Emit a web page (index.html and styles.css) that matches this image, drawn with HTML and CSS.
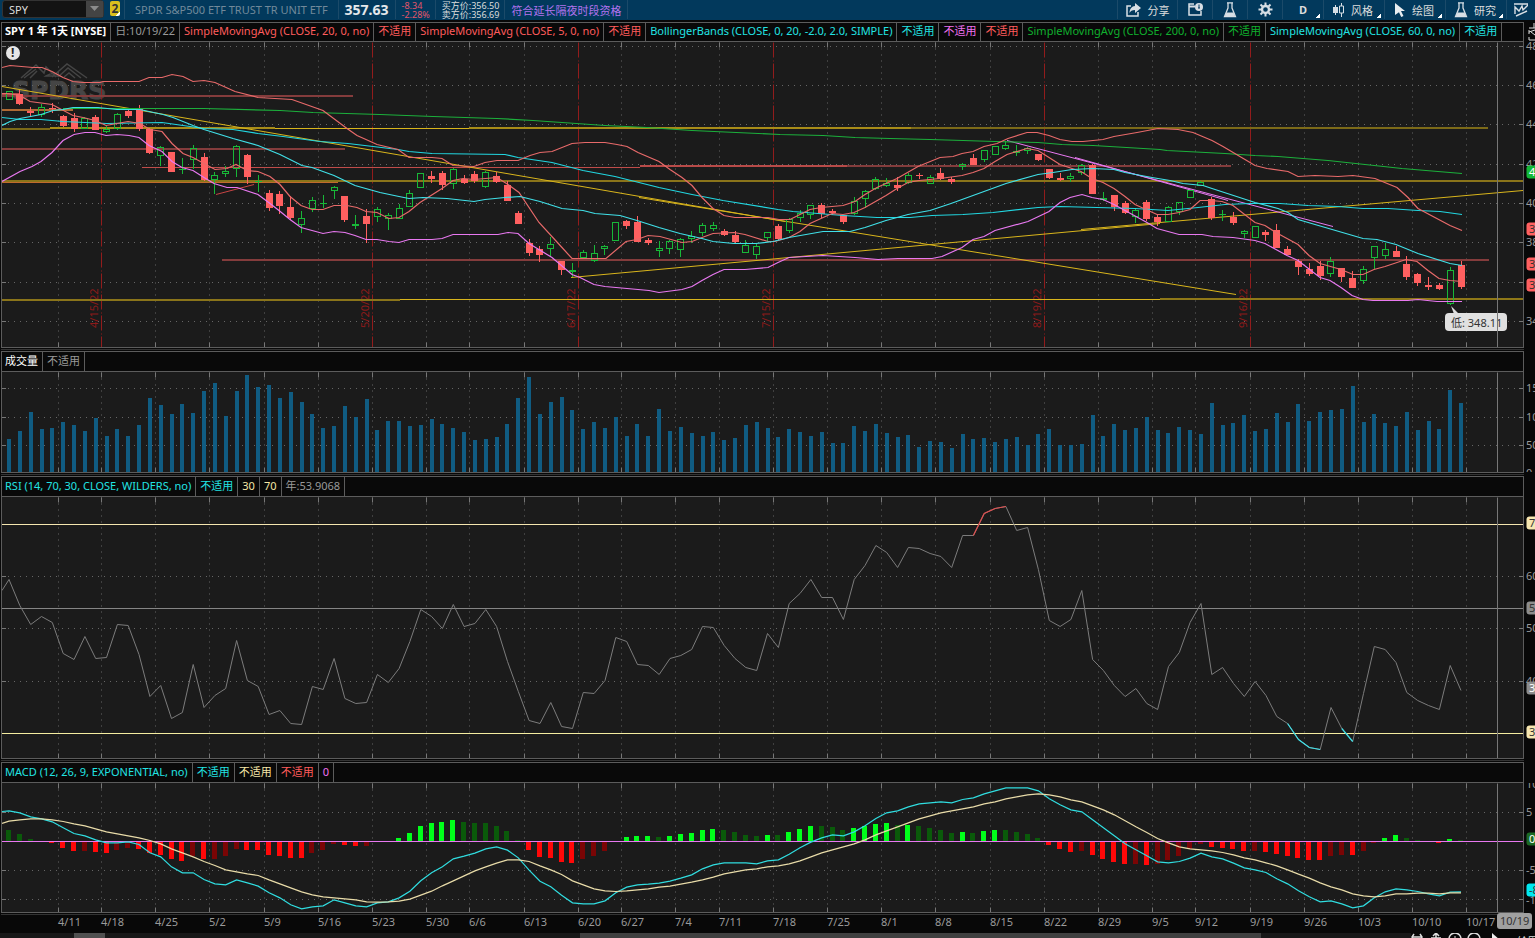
FILE: index.html
```html
<!DOCTYPE html>
<html lang="zh-CN">
<head>
  <meta charset="UTF-8" />
  <meta name="viewport" content="width=device-width, initial-scale=1.0"/>
  <title>SPY 1 年 1天</title>
  <link rel="stylesheet" href="styles.css">
</head>
<body>
  <header class="toolbar">
    <div class="symbol-box">
      <input type="text" id="symbol" class="symbol" value="SPY" aria-label="代码" />
      <button type="button" class="symbol-drop" aria-label="代码列表">
        <svg width="9" height="6" viewBox="0 0 9 6"><path d="M0 0h9L4.500 5z" fill="#8c8c8c"/></svg>
      </button>
    </div>
    <button type="button" class="link-badge corner">2</button>
    <div class="cell company">SPDR S&amp;P500 ETF TRUST TR UNIT ETF</div>
    <div class="cell last">357.63</div>
    <div class="cell small down">-8.34<br>-2.28%</div>
    <div class="cell small">买方价:356.50<br>卖方价:356.69</div>
    <div class="cell session">符合延长隔夜时段资格</div>
    <div class="spacer"></div>
    <button type="button" class="tool w-share">
      <svg width="16" height="14" viewBox="0 0 16 14"><path d="M5 3H1v10h11V9" fill="none" stroke="#d8dfe5" stroke-width="1.500"/><path d="M9 0l6 5-6 5V7C6 7 4.500 8 3.500 10 3.500 6 6 3 9 3z" fill="#d8dfe5"/></svg>
      分享
    </button>
    <button type="button" class="tool w-icon" aria-label="日程">
      <svg width="15" height="13" viewBox="0 0 15 13"><path d="M6 1H1v11h12V8" fill="none" stroke="#d8dfe5" stroke-width="1.500"/><path d="M1 3.500h6" stroke="#d8dfe5" stroke-width="2"/><circle cx="11" cy="4" r="4" fill="#d8dfe5"/><path d="M11 1.500v3.500M10 5h2" fill="none" stroke="#02395c"/></svg>
    </button>
    <button type="button" class="tool w-icon" aria-label="实验">
      <svg width="14" height="16" viewBox="0 0 14 16"><path d="M4 .8h6M5 1v5L1.500 14.500h11L9 6V1" fill="none" stroke="#d8dfe5" stroke-width="1.300"/><path d="M3.500 10.500h7l1.500 3.500H2z" fill="#d8dfe5"/></svg>
    </button>
    <button type="button" class="tool w-icon" aria-label="设置">
      <svg width="15" height="15" viewBox="0 0 15 15"><circle cx="7.500" cy="7.500" r="3.500" fill="none" stroke="#d8dfe5" stroke-width="2.400"/><path d="M7.500 .5v3M7.500 11.500v3M.5 7.500h3M11.500 7.500h3M2.500 2.500l2 2M10.500 10.500l2 2M12.500 2.500l-2 2M4.500 10.500l-2 2" stroke="#d8dfe5" stroke-width="2"/></svg>
    </button>
    <button type="button" class="tool w-day corner"><b>D</b></button>
    <button type="button" class="tool w-menu corner">
      <svg width="12" height="14" viewBox="0 0 12 14"><path d="M2.500 2v10M8.500 0v14" stroke="#d8dfe5"/><path d="M0 4h5v6H0z" fill="#d8dfe5"/><path d="M6.500 3h4v7h-4z" fill="#02395c" stroke="#d8dfe5"/></svg>
      风格
    </button>
    <button type="button" class="tool w-menu corner">
      <svg width="12" height="14" viewBox="0 0 12 14"><path d="M1 0l10 8H7l2.500 5-2.300 1L5 9.200 1 12z" fill="#e8edf0"/></svg>
      绘图
    </button>
    <button type="button" class="tool w-menu corner">
      <svg width="14" height="16" viewBox="0 0 14 16"><path d="M4 .8h6M5 1v5L1.500 14.500h11L9 6V1" fill="none" stroke="#d8dfe5" stroke-width="1.300"/><path d="M3.500 10.500h7l1.500 3.500H2z" fill="#d8dfe5"/></svg>
      研究
    </button>
    <button type="button" class="tool w-last" aria-label="形态">
      <svg width="14" height="15" viewBox="0 0 14 15"><path d="M0 2h14M1 12V5l4 4 3-5 1 4 5-5M2 14l11-5" fill="none" stroke="#d8dfe5" stroke-width="1.400"/></svg>
    </button>
  </header>

  <main class="charts">
    <div class="chart-row">
      <section class="panel">
        <div class="legend first">
          <span class="white bold">SPY 1 年 1天 [NYSE]</span>
          <span class="gray">日:10/19/22</span>
          <span class="red">SimpleMovingAvg (CLOSE, 20, 0, no)</span>
          <span class="red">不适用</span>
          <span class="red">SimpleMovingAvg (CLOSE, 5, 0, no)</span>
          <span class="red">不适用</span>
          <span class="cyan">BollingerBands (CLOSE, 0, 20, -2.0, 2.0, SIMPLE)</span>
          <span class="cyan">不适用</span>
          <span class="magenta">不适用</span>
          <span class="red">不适用</span>
          <span class="green">SimpleMovingAvg (CLOSE, 200, 0, no)</span>
          <span class="green">不适用</span>
          <span class="cyan">SimpleMovingAvg (CLOSE, 60, 0, no)</span>
          <span class="cyan">不适用</span>
        </div>
        <svg class="plot price" id="price"></svg>
      </section>
      <div class="scale">
        <svg class="scale-icon" width="11" height="19" viewBox="0 0 11 19"><path d="M5 5h6M10 0v5M5 7v4M5 9l6-2M7 9l4 3M5 14v3h6" fill="none" stroke="#ddd"/></svg>
        <svg class="axis price" id="priceAxis"></svg>
      </div>
    </div>

    <div class="chart-row">
      <section class="panel">
        <div class="legend">
          <span class="white">成交量</span>
          <span class="gray">不适用</span>
        </div>
        <svg class="plot volume" id="volume"></svg>
      </section>
      <div class="scale"><svg class="axis volume" id="volumeAxis"></svg></div>
    </div>

    <div class="chart-row">
      <section class="panel">
        <div class="legend">
          <span class="cyan">RSI (14, 70, 30, CLOSE, WILDERS, no)</span>
          <span class="cyan">不适用</span>
          <span class="cream">30</span>
          <span class="cream">70</span>
          <span class="gray">年:53.9068</span>
        </div>
        <svg class="plot rsi" id="rsi"></svg>
      </section>
      <div class="scale"><svg class="axis rsi" id="rsiAxis"></svg></div>
    </div>

    <div class="chart-row">
      <section class="panel">
        <div class="legend">
          <span class="cyan">MACD (12, 26, 9, EXPONENTIAL, no)</span>
          <span class="cyan">不适用</span>
          <span class="cream">不适用</span>
          <span class="red">不适用</span>
          <span class="magenta">0</span>
        </div>
        <svg class="plot macd" id="macd"></svg>
      </section>
      <div class="scale"><svg class="axis macd" id="macdAxis"></svg></div>
    </div>
  </main>

  <svg class="dates" id="dates"></svg>

  <footer class="bottom">
    <div class="pager"><div class="pager-thumb"></div></div>
    <div class="scroll"><div class="scroll-thumb"></div></div>
    <div class="bottom-tools">
      <svg width="90" height="16" viewBox="0 0 90 16"><path d="M1 4h10M3 1L1 4l2 4M9 1l2 3-2 4M25 0v12M20 5h10M22 3l3-3 3 3" fill="none" stroke="#ddd" stroke-width="1.500"/><circle cx="44" cy="6" r="6" fill="none" stroke="#ddd" stroke-width="1.500"/><path d="M44 3v6" stroke="#ddd"/><circle cx="63" cy="6" r="6" fill="none" stroke="#ddd" stroke-width="1.500"/><path d="M81 0l8 7h-8z" fill="#eee"/></svg>
      <span>绘图</span>
    </div>
  </footer>

  <script src="chart.js"></script>
</body>
</html>
```

FILE: styles.css
```css
* {
  box-sizing: border-box;
}

body {
  margin: 0;
  min-height: 100vh;
  background: #080808;
  color: #ddd;
  font-family: "Noto Sans", "Noto Sans CJK SC", sans-serif;
  font-size: 11px;
  overflow: hidden;
}

svg {
  display: block;
  flex: none;
}

button {
  font-family: inherit;
  color: inherit;
  border: none;
  background: none;
  padding: 0;
}

/* toolbar */
.toolbar {
  display: flex;
  height: 20px;
  margin-bottom: 2px;
  padding-bottom: 1px;
  background: #02395c;
  white-space: nowrap;
  overflow: hidden;
}

.symbol-box {
  display: flex;
  width: 102px;
  height: 18px;
  margin: 0 6px 0 2px;
  border: 1px solid #333;
  border-radius: 3px;
  background: #131313;
}

.symbol {
  flex: 1;
  min-width: 0;
  padding: 0 6px;
  border: none;
  background: none;
  color: #ddd;
  font: inherit;
}

.symbol-drop {
  display: flex;
  align-items: center;
  justify-content: center;
  width: 17px;
  background: #444;
}

.link-badge {
  width: 10px;
  height: 15px;
  margin: 1px 4px 0 0;
  border-radius: 2px;
  background: #d9bf1e;
  color: #333;
  font-size: 12px;
  font-weight: bold;
  line-height: 15px;
}

.cell {
  display: flex;
  align-items: center;
  padding: 0 7px;
  border-left: 1px solid #1b4a69;
}

.company {
  padding: 0 10px;
  color: #71899a;
}

.last {
  padding: 0 6px;
  color: #e4e8eb;
  font-size: 14px;
  font-weight: bold;
}

.small {
  padding: 0 5px 0 6px;
  font-size: 9px;
  line-height: 9px;
}

.down {
  color: #e2556a;
}

.session {
  padding: 0 6px;
  border-right: 1px solid #1b4a69;
  color: #b273ee;
}

.spacer {
  flex: 1;
}

.tool {
  display: flex;
  align-items: center;
  justify-content: center;
  gap: 6px;
  border-left: 1px solid #1b4a69;
  font-size: 11px;
}

.w-share {
  width: 60px;
}

.w-icon {
  width: 35px;
}

.w-day {
  width: 41px;
}

.w-menu {
  width: 61px;
  padding-right: 2px;
}

.w-last {
  width: 29px;
}

.corner {
  background-image: linear-gradient(135deg, transparent 50%, #fff 50%);
  background-size: 4px 4px;
  background-repeat: no-repeat;
  background-position: right 3px bottom 1px;
}

.link-badge.corner {
  background-position: right bottom;
}

/* chart panels */
.chart-row {
  display: flex;
  margin-bottom: 3px;
}

.chart-row:last-child {
  margin-bottom: 0;
}

.panel {
  flex: 1;
  min-width: 0;
  margin-left: 1px;
  border: 1px solid #5c5c5c;
  box-shadow: 0 1px 0 #080808, 0 2px 0 #333;
}

.legend {
  display: flex;
  height: 20px;
  border-bottom: 1px solid #5c5c5c;
  background: #090909;
  line-height: 18px;
  white-space: nowrap;
  overflow: hidden;
}

.legend.first {
  height: 19px;
  line-height: 16px;
}

.legend span {
  padding: 0 4px;
  border-right: 1px solid #5c5c5c;
}

.legend span:first-child {
  padding-left: 3px;
}

.bold {
  font-weight: bold;
}

.white {
  color: #fff;
}

.gray {
  color: #999;
}

.red {
  color: #ff5c5c;
}

.cyan {
  color: #22e3e3;
}

.magenta {
  color: #f070f0;
}

.green {
  color: #10b02e;
}

.cream {
  color: #f5e6a6;
}

.plot {
  width: 100%;
  background: #1b1b1b;
}

.price {
  height: 305px;
}

.volume {
  height: 100px;
}

.rsi {
  height: 261px;
}

.macd {
  height: 129px;
}

.scale {
  display: flex;
  flex-direction: column;
  justify-content: flex-end;
  width: 11px;
  padding-bottom: 1px;
  overflow: hidden;
}

.axis {
  width: 11px;
}

.dates {
  width: 100%;
  height: 20px;
}

svg text {
  font-size: 11px;
  fill: #9a9a9a;
}

svg .expiry {
  fill: #8c1a1a;
}

svg .tip-text,
svg .tag-dark {
  fill: #333;
}

svg .tag-light {
  fill: #fff;
}

svg .watermark {
  fill: #454545;
  stroke: #454545;
  font-family: "DejaVu Sans", sans-serif;
  font-size: 25px;
  font-weight: bold;
}

svg .alert {
  fill: #222;
  font-size: 12px;
  font-weight: bold;
}

/* bottom strip */
.bottom {
  display: flex;
  height: 5px;
  overflow: hidden;
}

.pager {
  flex: 578;
  background: #181818;
}

.pager-thumb {
  width: 31px;
  height: 5px;
  margin-left: 74px;
  background: #505050;
}

.scroll {
  flex: 829;
  background: #181818;
}

.scroll-thumb {
  width: 82%;
  height: 5px;
  background: #404040;
}

.bottom-tools {
  display: flex;
  gap: 16px;
  width: 124px;
  height: 16px;
  white-space: nowrap;
}
```

FILE: chart.js
```js
const NS = "http://www.w3.org/2000/svg";
const BASE_WIDTH = 1521;
const COUNT = 135;

const SALMON = "#e86a6a";
const CYAN = "#40e0e8";
const MAGENTA = "#e878f0";
const GREEN = "#1cb03c";
const YELLOW = "#d9b51c";
const CREAM = "#f5e6b0";

const weeks = [
  [58, "4/11"], [101, "4/18"], [155, "4/25"], [209, "5/2"], [264, "5/9"], [318, "5/16"], [372, "5/23"],
  [426, "5/30"], [469, "6/6"], [524, "6/13"], [578, "6/20"], [621, "6/27"], [675, "7/4"], [719, "7/11"],
  [773, "7/18"], [827, "7/25"], [881, "8/1"], [935, "8/8"], [990, "8/15"], [1044, "8/22"], [1098, "8/29"],
  [1152, "9/5"], [1195, "9/12"], [1250, "9/19"], [1304, "9/26"], [1358, "10/3"], [1412, "10/10"], [1466, "10/17"]
];

const expiries = [[101, "4/15/22"], [372, "5/20/22"], [578, "6/17/22"], [773, "7/15/22"], [1044, "8/19/22"], [1250, "9/16/22"]];

// up (1) or down (0), wick top, body top, body bottom, wick bottom
const candles = [
  [1,91,91,100,100],[0,90,94,104,105],[0,107,111,113,117],[1,104,107,115,117],[0,103,108,109,113],[0,115,116,126,127],
  [0,113,118,129,132],[1,117,118,129,129],[0,115,117,130,130],[1,126,129,132,133],[1,113,114,129,130],[0,109,111,116,118],
  [0,105,109,129,131],[0,128,129,153,154],[1,146,147,156,166],[0,152,152,172,172],[1,158,169,170,174],[1,145,148,160,169],
  [0,153,157,180,181],[1,172,175,180,194],[1,166,171,174,177],[1,145,146,169,177],[0,154,155,177,184],[1,175,181,182,192],
  [0,190,193,208,211],[0,191,194,206,214],[0,196,207,218,220],[1,211,218,225,233],[1,197,200,209,212],[1,195,203,204,208],
  [1,186,187,191,199],[0,196,196,220,222],[1,215,224,226,229],[0,209,216,224,243],[1,207,209,217,222],[1,213,215,219,230],
  [1,204,208,219,219],[1,190,193,207,207],[1,173,173,188,188],[0,171,176,179,183],[0,171,173,185,190],[1,168,169,184,189],
  [0,175,179,183,184],[0,171,174,181,183],[1,171,172,187,188],[0,172,176,182,183],[0,181,185,201,201],[0,211,213,224,224],
  [0,239,243,253,256],[0,246,249,255,262],[1,237,244,249,257],[0,261,261,270,275],[1,263,270,272,277],[1,250,252,258,258],
  [1,245,253,261,262],[1,245,246,249,255],[1,222,222,241,241],[0,220,221,226,229],[0,216,222,242,242],[0,238,240,243,245],
  [1,241,248,251,257],[1,240,241,249,254],[1,238,239,250,257],[1,231,236,239,243],[1,223,225,233,236],[1,222,225,229,231],
  [0,229,231,235,236],[0,231,235,242,244],[1,240,245,253,253],[1,244,246,255,259],[1,232,232,238,241],[0,224,226,239,241],
  [1,218,219,231,233],[1,210,213,218,222],[1,205,205,215,219],[0,203,205,214,218],[0,209,211,213,215],[0,215,215,222,224],
  [1,197,201,214,215],[1,190,191,199,208],[1,177,179,189,190],[1,178,183,186,187],[0,177,185,188,191],[1,173,175,183,184],
  [0,173,175,176,179],[1,175,177,184,184],[0,168,173,179,180],[0,177,179,182,184],[1,163,164,167,170],[0,154,158,165,165],
  [1,150,150,160,162],[1,146,146,155,155],[1,141,145,149,150],[1,145,151,153,156],[1,147,148,151,154],[0,154,154,160,161],
  [0,169,169,178,179],[0,173,178,180,181],[1,173,176,179,182],[1,164,165,173,175],[0,164,165,194,194],[1,192,198,200,201],
  [0,195,195,207,211],[0,201,203,213,214],[1,209,210,217,223],[0,200,202,219,221],[0,215,217,222,226],[1,206,207,222,222],
  [1,202,202,212,215],[1,190,190,198,198],[1,181,182,186,186],[0,197,199,218,220],[1,210,214,215,221],[0,212,217,223,225],
  [1,230,231,234,238],[1,226,226,238,238],[0,230,232,235,241],[0,224,230,248,248],[0,246,249,255,255],[0,259,261,267,275],
  [0,263,269,274,276],[0,261,266,276,280],[1,257,261,274,277],[0,268,268,277,282],[0,271,278,288,288],[1,266,269,281,284],
  [1,246,246,258,269],[1,243,249,256,259],[0,246,251,257,257],[0,256,264,277,280],[0,273,274,283,286],[0,277,285,287,290],
  [0,283,285,289,290],[1,267,270,304,305],[0,261,265,287,289]
];

const upperBand = "2,67 10,65 33,67 42,67 52,71 63,77 73,81 83,82 100,82 103,81 139,81 149,77 162,77 172,74 183,76 193,81 204,80 215,82 235,91 258,97 292,99 323,110 347,128 357,135 366,139 377,144 398,149 409,157 432,157 442,158 453,165 474,166 485,162 497,160 518,160 530,155 540,152 552,151 572,143 585,142 605,142 617,144 627,146 638,152 659,161 670,169 682,177 692,185 702,197 713,208 724,215 735,217 768,217 779,219 790,219 800,214 810,209 821,207 843,205 855,201 865,194 877,187 897,178 918,166 940,157 953,156 962,153 973,151 984,146 997,143 1008,138 1027,132 1037,132 1049,135 1060,139 1072,141 1083,141 1103,139 1114,136 1137,132 1158,128 1178,129 1193,132 1212,140 1223,146 1245,159 1255,165 1267,168 1288,171 1298,176 1315,175 1338,176 1353,175 1375,178 1397,187 1408,197 1418,208 1450,225 1462,230";
const sma5 = "2,93 8,93 20,95 30,101 52,104 73,115 83,117 95,120 106,125 117,123 128,121 140,123 150,129 162,131 172,143 183,153 193,157 204,163 215,169 227,168 236,164 247,170 258,171 270,176 280,184 290,196 301,205 312,209 323,209 334,205 347,205 357,207 366,211 377,212 389,218 399,217 409,211 420,202 442,188 453,180 463,178 474,179 497,177 508,184 519,192 539,222 562,247 572,258 606,258 626,241 637,239 648,235 660,236 682,242 692,241 702,237 713,233 734,232 745,234 768,241 775,241 789,237 800,231 810,223 821,218 832,213 843,214 854,212 865,207 886,195 897,188 908,182 919,180 940,178 962,175 973,172 984,168 995,161 1007,154 1027,148 1038,150 1049,157 1060,164 1081,171 1092,178 1103,182 1114,188 1125,196 1135,204 1146,209 1157,214 1168,214 1179,212 1190,209 1200,200 1211,200 1222,201 1233,205 1255,222 1265,225 1276,232 1287,238 1298,244 1309,255 1320,263 1341,269 1353,274 1363,274 1374,269 1385,266 1406,259 1417,261 1428,270 1439,278 1450,280 1462,281";
const lowerBand = "2,181 20,171 32,166 41,161 52,152 63,140 74,134 85,132 95,132 106,135 117,134 129,135 139,137 149,145 162,151 172,161 182,167 193,170 204,177 214,183 227,187 237,187 258,194 270,203 279,210 290,219 301,227 323,233 334,231 345,232 355,235 366,239 377,239 389,241 399,242 409,239 432,239 442,238 453,234 498,234 508,232 518,233 529,243 552,257 572,274 580,277 594,284 605,286 649,290 659,292 682,289 692,286 702,280 713,274 724,269 745,269 768,267 778,262 789,257 823,255 855,257 878,259 898,258 932,258 942,256 962,247 973,239 984,236 995,230 1028,221 1049,211 1060,202 1070,197 1082,194 1092,197 1103,199 1114,204 1125,210 1147,222 1157,228 1179,234 1202,234 1213,236 1233,237 1255,240 1265,243 1276,249 1287,255 1298,260 1320,277 1330,280 1341,287 1352,295 1363,299 1373,300 1408,300 1418,299 1437,301 1462,301";
const sma20 = "2,125 10,121 20,118 41,114 53,110 63,109 73,107 98,107 117,109 140,109 149,111 163,114 173,117 193,125 204,129 233,138 258,145 280,154 302,165 312,167 334,175 355,185 380,192 399,196 409,198 423,197 447,198 474,201 485,199 505,197 520,196 540,201 562,208 583,210 595,213 620,215 637,220 659,227 680,233 702,238 713,241 734,243 756,243 773,241 789,237 823,231 850,231 865,227 886,220 908,214 930,210 951,203 973,195 1006,183 1038,174 1053,172 1072,169 1093,168 1114,169 1125,172 1152,177 1170,180 1183,183 1203,185 1212,188 1255,202 1278,208 1288,212 1298,219 1315,224 1363,238 1377,239 1396,244 1418,253 1450,263 1462,265";
const sma60 = "2,117 20,119 41,119 63,121 107,123 162,122 183,125 204,128 233,129 258,133 283,136 320,141 348,143 398,149 409,151 432,153 505,154 518,157 552,162 583,170 615,176 659,187 692,194 723,200 778,209 793,211 843,215 877,217 910,217 932,215 963,214 993,212 1038,207 1060,206 1097,207 1135,208 1168,210 1198,207 1225,204 1250,203 1280,203 1308,205 1338,206 1363,208 1388,208 1418,210 1440,211 1462,214";
const sma200 = "63,108 140,108 204,108 280,110 313,112 380,114 433,116 497,118 533,120 562,122 605,125 647,127 692,130 780,134 823,135 855,137 890,138 930,139 963,140 995,141 1038,142 1062,144 1093,145 1160,149 1167,150 1225,153 1255,155 1278,156 1328,160 1402,168 1462,173";

// x1, y1, x2, y2, colour, width
const drawings = [
  [2,96,353,96,"#843c3c",2],[2,94,20,94,"#b04848",2],[2,149,345,149,"#843c3c",2],[142,167,640,167,"#c04c4a",1],
  [640,166,847,166,"#b84a48",2],[847,166,1231,166,"#843c3c",2],[222,260,1489,260,"#843c3c",2],[2,110,73,110,"#b06a34",2],
  [2,129,50,129,"#7c6a18",2],[50,128,275,128,"#a88c18",2],[275,128,469,128,YELLOW,1],[469,128,911,128,"#a88c18",2],
  [911,128,1488,128,"#7c6a18",2],[2,182,338,182,"#c06a2c",2],[2,181,1523,181,"#8a741a",2],[2,300,400,300,"#8a741a",2],
  [400,299,1160,299,YELLOW,1],[1160,299,1523,299,"#8f7818",2],[216,194,254,184,"#c84444",1],
  [2,86,785,221,YELLOW,1],[639,197,1236,294,YELLOW,1],[571,277,1160,223,YELLOW,1],[1081,229,1523,190,YELLOW,1],
  [1007,140,1333,226,MAGENTA,1],[1075,157,1228,200,MAGENTA,1]
];

const volumes = [
  33,41,60,43,44,50,47,41,54,36,43,36,47,74,67,58,68,59,81,89,56,81,97,85,87,74,80,70,58,44,46,66,55,73,42,51,51,46,47,53,
  48,44,40,32,33,35,48,74,95,58,70,75,62,43,50,44,55,36,48,36,63,41,45,39,36,40,32,34,47,50,44,35,43,40,36,40,29,29,46,41,
  48,39,35,37,25,31,30,24,38,33,34,30,33,35,27,38,43,27,27,28,57,36,48,42,44,55,42,39,45,42,38,69,47,49,57,41,43,59,50,68,
  51,60,62,63,86,50,58,49,46,60,42,51,43,82,69
];

const rsi = [
  579,605,624,616,622,653,659,636,658,657,624,625,654,696,685,718,712,664,707,695,688,640,680,686,714,710,723,724,686,689,
  658,698,703,702,674,682,668,641,609,616,628,604,626,623,609,626,661,691,720,723,702,726,728,692,693,680,637,641,664,665,
  674,658,655,649,626,627,645,658,667,670,633,647,603,593,579,597,597,619,579,565,545,552,567,547,548,553,556,567,535,535,
  513,508,506,530,527,569,620,626,619,590,659,670,685,696,688,703,709,666,652,622,603,674,667,683,696,681,695,716,723,739,
  747,749,707,728,741,693,646,649,662,692,700,705,709,665,690
];

// MACD values are kept in thirds of a pixel
const histogram = [
  34,22,7,0,-5,-20,-29,-29,-32,-35,-26,-20,-23,-35,-42,-53,-59,-45,-53,-53,-45,-23,-26,-27,-42,-45,-50,-51,-35,-26,
  -8,-11,-14,-14,-4,0,10,25,46,55,58,64,58,55,55,46,31,4,-26,-47,-50,-62,-65,-53,-45,-29,-3,13,14,16,
  13,16,22,25,34,37,34,28,19,16,19,19,28,37,46,46,43,34,40,46,52,55,48,49,46,40,34,25,28,25,
  31,34,34,28,22,10,-11,-23,-32,-29,-41,-53,-62,-68,-68,-71,-68,-56,-45,-23,-8,-17,-20,-23,-29,-29,-32,-38,-44,-50,
  -56,-57,-44,-41,-42,-29,-5,10,19,10,4,-2,-5,7,3
];
const macdLine = [
  151,157,169,175,184,202,219,226,238,247,247,244,252,277,289,319,337,337,357,370,373,358,367,377,397,412,433,445,439,436,
  418,427,436,439,427,424,412,392,361,337,319,295,287,278,265,259,269,292,329,362,379,404,427,430,430,421,397,380,373,371,
  368,362,353,343,325,313,307,307,307,310,301,298,281,262,245,232,223,226,214,196,174,157,151,139,130,127,124,127,117,112,
  100,91,82,82,82,91,115,133,148,154,178,202,226,250,268,286,304,307,303,293,278,289,295,308,322,328,336,355,370,391,
  409,424,421,430,442,436,412,394,385,388,393,400,406,395,394
];
const signalLine = [
  182,178,175,175,178,183,190,196,205,214,220,226,232,240,250,265,277,289,303,315,328,334,340,345,358,370,382,394,403,409,
  412,415,418,424,425,424,422,416,404,392,376,361,346,331,319,308,298,298,303,316,328,342,361,373,385,391,393,391,388,385,
  380,377,371,365,358,350,340,334,328,325,319,316,310,301,289,277,268,259,250,238,223,211,199,187,175,166,157,151,145,139,
  130,124,115,109,103,100,103,109,118,124,136,148,163,181,199,216,234,247,259,265,268,271,276,283,292,298,307,316,328,341,
  353,367,379,388,400,406,409,406,400,400,398,398,400,397,397
];

let scaleX = 1;

const px = x => (x - 2) * scaleX;
const barX = i => 9 + i * 10.836;

function el(parent, tag, attrs, text) {
  const node = document.createElementNS(NS, tag);
  for (const key in attrs) node.setAttribute(key, attrs[key]);
  if (text !== undefined) node.textContent = text;
  parent.appendChild(node);
  return node;
}

function line(g, x1, y1, x2, y2, stroke, width, extra) {
  // straight rules sit on whole pixels
  const half = width % 2 ? 0.5 : 0;
  let a = px(x1), b = px(x2);
  if (x1 === x2) a = b = Math.round(a) + half;
  el(g, "line", Object.assign({ x1: a, y1: y1 + half, x2: b, y2: y2 + half, stroke, "stroke-width": width }, extra));
}

function curve(g, points, stroke, width) {
  const d = points.map(p => px(p[0]).toFixed(1) + "," + (p[1] + 0.5)).join(" ");
  el(g, "polyline", { points: d, fill: "none", stroke, "stroke-width": width || 1.2 });
}

function parse(str) {
  return str.split(" ").map(p => p.split(",").map(Number));
}

function start(id, top) {
  const svg = document.getElementById(id);
  svg.innerHTML = "";
  scaleX = svg.clientWidth / BASE_WIDTH;
  return el(svg, "g", { transform: "translate(0," + -top + ")" });
}

function grid(g, top, bottom, rows, skip) {
  const dots = { "stroke-dasharray": "1 5" };
  rows.forEach(y => {
    line(g, 2, y, 1523, y, "#666", 1, dots);
    line(g, 2, y, 6, y, "#777", 1);
    line(g, 1519, y, 1523, y, "#777", 1);
  });
  weeks.forEach(([x]) => {
    if (skip.includes(x)) return;
    line(g, x, top, x, bottom, "#666", 1, dots);
    line(g, x, top, x, top + 5, "#777", 1);
    line(g, x, bottom - 5, x, bottom, "#777", 1);
  });
}

function cursor(g, top, bottom) {
  line(g, 1497, top, 1497, bottom, "#777", 1);
}

function drawPrice() {
  const g = start("price", 42);

  el(g, "path", { d: "M19 78L34 65l8 8 2-6 10 10M22 78l12-9M28 78l7-7M50 77l15-13 20 14M56 77l10-9 13 10M62 77l5-4 6 5M44 76q8-5 14 0z", fill: "none", stroke: "#454545", "stroke-width": 1.5 });
  el(g, "text", { x: 10, y: 99, class: "watermark" }, "SPDRS");

  grid(g, 42, 347, [46, 85, 124, 164, 203, 242, 282, 321], expiries.map(e => e[0]));
  expiries.forEach(([x, label]) => {
    line(g, x, 42, x, 347, "#921c1c", 1, { "stroke-dasharray": "15 3 1 2" });
    const tx = px(x) - 3;
    el(g, "text", { x: tx, y: 328, class: "expiry", transform: "rotate(-90 " + tx + " 328)" }, label);
  });

  drawings.forEach(d => line(g, ...d));

  candles.forEach(([up, high, top, bottom, low], i) => {
    const cx = Math.floor(px(barX(i)));
    const color = up ? "#18b838" : "#ff6060";
    if (high < top) el(g, "rect", { x: cx, y: high, width: 1, height: top - high, fill: color });
    if (low > bottom) el(g, "rect", { x: cx, y: bottom, width: 1, height: low - bottom, fill: color });
    if (up && bottom - top > 2) {
      el(g, "rect", { x: cx - 2.5, y: top + 0.5, width: 6, height: bottom - top - 1, fill: "none", stroke: color });
    } else {
      el(g, "rect", { x: cx - 3, y: top, width: 7, height: bottom - top, fill: color });
    }
  });

  curve(g, parse(sma200), GREEN);
  curve(g, parse(sma60), "#22d6e0");
  curve(g, parse(upperBand), SALMON);
  curve(g, parse(sma5), SALMON);
  curve(g, parse(lowerBand), MAGENTA);
  curve(g, parse(sma20), CYAN);

  const tip = px(1445);
  el(g, "path", { d: "M" + (tip + 6) + " 306l3 8h5z", fill: "#e0e0e0" });
  el(g, "rect", { x: tip, y: 313, width: 62, height: 18, rx: 4, fill: "#e0e0e0" });
  el(g, "text", { x: tip + 6, y: 327, class: "tip-text" }, "低: 348.11");
  cursor(g, 42, 347);

  el(g, "circle", { cx: 11, cy: 53, r: 7, fill: "#e6e6e6" });
  el(g, "text", { x: 9, y: 57, class: "alert" }, "!");
}

function drawVolume() {
  const g = start("volume", 372);
  grid(g, 372, 472, [388, 417, 445], []);
  volumes.forEach((h, i) => {
    el(g, "rect", { x: Math.round(px(barX(i))) - 2, y: 472 - h, width: 4, height: h, fill: "#105c82" });
  });
  cursor(g, 372, 472);
}

function drawRsi() {
  const g = start("rsi", 497);
  grid(g, 497, 758, [576, 628, 681], []);
  line(g, 2, 524, 1523, 524, CREAM, 1);
  line(g, 2, 733, 1523, 733, "#f5eda0", 1);
  line(g, 2, 608, 1523, 608, "#858585", 1);
  const points = rsi.map((y, i) => [barX(i), y]);
  curve(g, [[2, 590]].concat(points), "#7c7c7c", 1);
  curve(g, points.slice(89, 93), "#e05050");
  curve(g, points.slice(118, 122), CYAN);
  curve(g, points.slice(123, 125), CYAN);
  cursor(g, 497, 758);
}

function drawMacd() {
  const g = start("macd", 783);
  grid(g, 783, 912, [812, 870, 899], []);
  histogram.forEach((v, i) => {
    const growing = i > 0 && (v > 0 ? v > histogram[i - 1] : v < histogram[i - 1]);
    const color = v > 0 ? (growing ? "#00ff1a" : "#0a5a0a") : (growing ? "#ff0808" : "#7a0505");
    const h = Math.max(1, Math.round(Math.abs(v) / 3));
    if (v) el(g, "rect", { x: Math.round(px(barX(i))) - 3, y: v > 0 ? 841 - h : 841, width: 5, height: h, fill: color });
  });
  line(g, 2, 841, 1523, 841, MAGENTA, 1);
  const toPoint = (v, i) => [barX(i), 760 + v / 3];
  curve(g, [[2, 811]].concat(macdLine.map(toPoint)), "#30dde0");
  curve(g, [[2, 823]].concat(signalLine.map(toPoint)), "#e8dba8");
  cursor(g, 783, 912);
}

function drawAxis(id, top, labels, tags) {
  const g = start(id, top);
  labels.forEach(([y, text]) => el(g, "text", { x: 2, y: y + 4 }, text));
  tags.forEach(([y, text, fill, cls]) => {
    el(g, "rect", { x: 2.5, y: y - 6.5, width: 40, height: 13, rx: 3, fill });
    el(g, "text", { x: 5, y: y + 4, class: cls }, text);
  });
}

function drawDates() {
  const svg = document.getElementById("dates");
  svg.innerHTML = "";
  scaleX = (svg.clientWidth - 14) / BASE_WIDTH;
  weeks.forEach(([x, text]) => el(svg, "text", { x: px(x) + 2, y: 13 }, text));
  const bx = px(1497) + 2;
  el(svg, "rect", { x: bx, y: 0, width: 35, height: 16, rx: 3, fill: "#a0a0a0" });
  el(svg, "text", { x: bx + 3, y: 12, class: "tag-dark" }, "10/19");
}

function drawAll() {
  drawPrice();
  drawVolume();
  drawRsi();
  drawMacd();
  drawAxis("priceAxis", 42, [[46, "480"], [85, "460"], [124, "440"], [164, "420"], [203, "400"], [242, "380"], [321, "340"]], [
    [172, "415", "#12b838", "tag-light"], [229, "386", "#ff6060", "tag-dark"],
    [264, "368", "#ff6060", "tag-dark"], [285, "357", "#ff6060", "tag-dark"]
  ]);
  drawAxis("volumeAxis", 372, [[388, "150"], [417, "100"], [445, "50"], [473, "0"]], []);
  drawAxis("rsiAxis", 497, [[576, "60"], [628, "50"], [681, "40"]], [
    [523, "70", CREAM, "tag-dark"], [608, "53", "#8c8c8c", "tag-dark"],
    [688, "38", "#8c8c8c", "tag-light"], [732, "30", CREAM, "tag-dark"]
  ]);
  drawAxis("macdAxis", 783, [[784, "10"], [812, "5"], [870, "-5"], [900, "-10"]], [
    [839, "0", "#1c6a24", "tag-light"], [890, "-8", "#00e8f0", "tag-dark"]
  ]);
  drawDates();
}

drawAll();
window.addEventListener("resize", drawAll);
```
